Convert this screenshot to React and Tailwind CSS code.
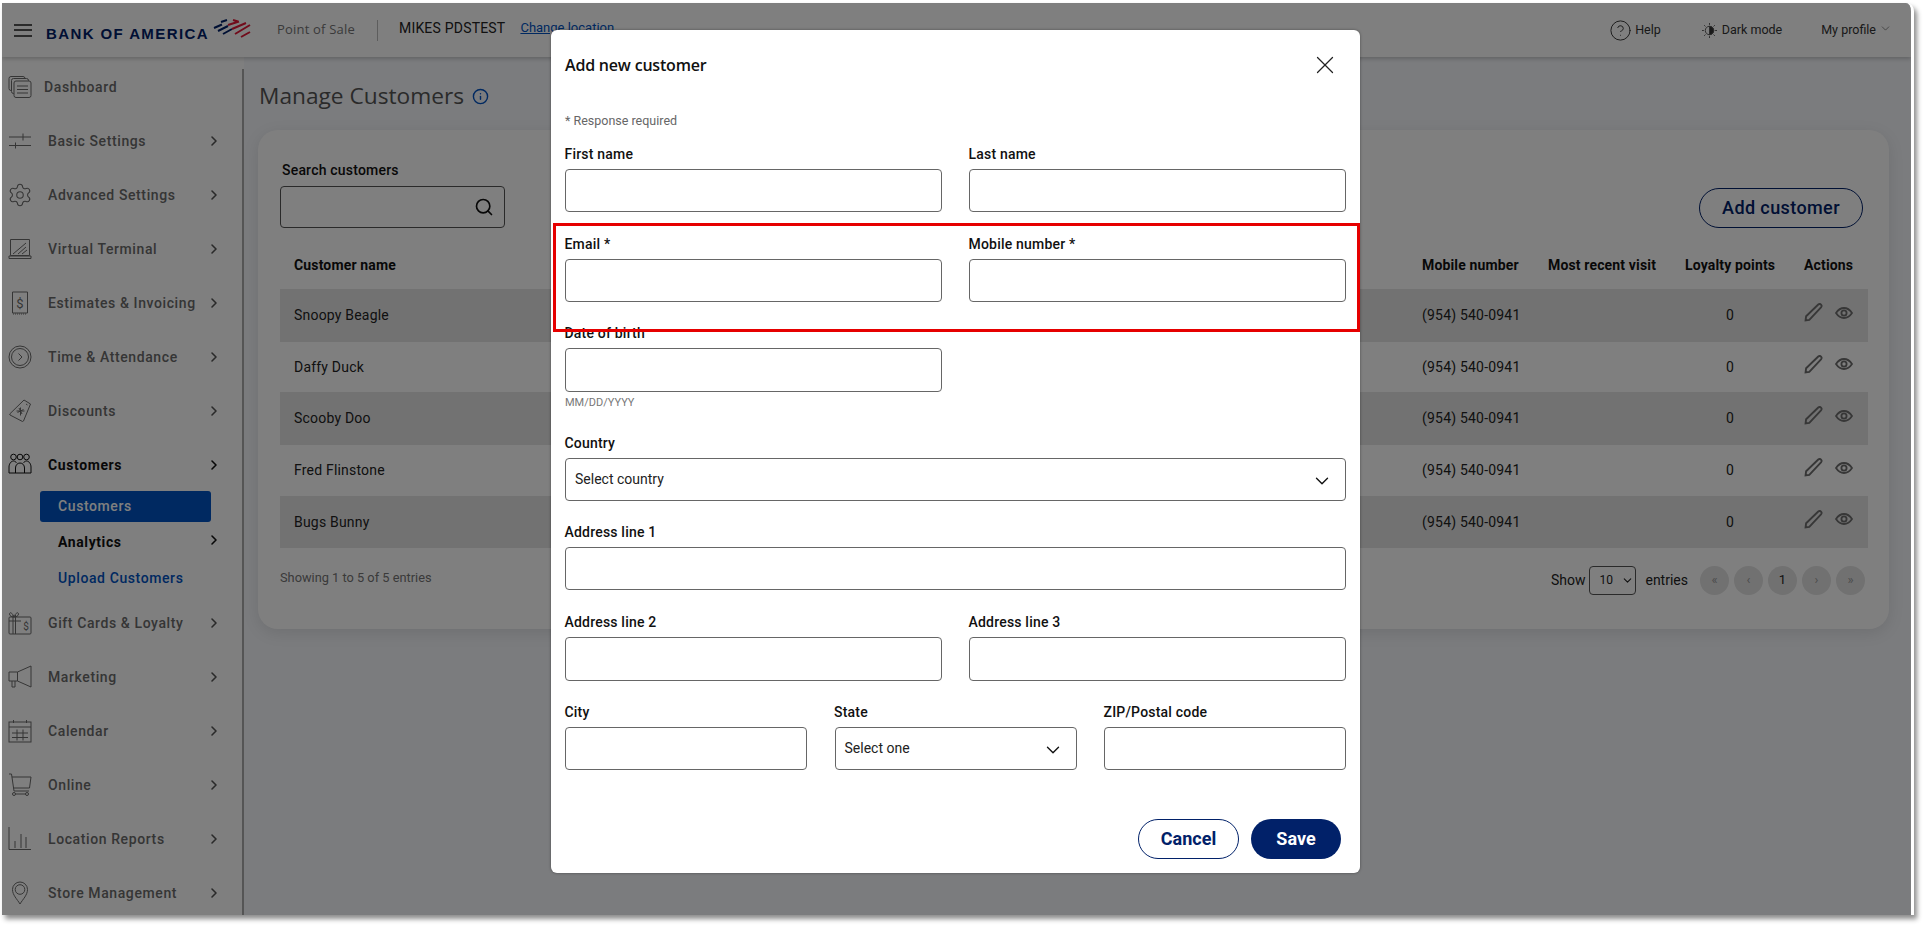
import React from "react";
import { Settings, Search, ChevronRight, ChevronDown, X, HelpCircle, Info } from "lucide-react";

const Ico = ({ children }) => (
  <svg viewBox="0 0 24 24" fill="none" stroke="currentColor" strokeWidth="1" className="w-[24px] h-[24px] shrink-0">
    {children}
  </svg>
);

const icons = {
  dashboard: (
    <Ico>
      <rect x="1" y="1.5" width="16" height="14" rx="2" />
      <rect x="3.5" y="3.5" width="17" height="15" rx="2" fill="#fff" />
      <rect x="6" y="6" width="17" height="16.5" rx="2" fill="#fff" />
      <path d="M9 11h11M9 14.5h11M9 18h11" />
    </Ico>
  ),
  sliders: (
    <Ico>
      <path d="M1 8h22M1 16.5h22M15 4.5v7M7.5 13.5v6" />
    </Ico>
  ),
  gear: <Settings size={26} strokeWidth={1} className="shrink-0 -ml-px" />,
  terminal: (
    <Ico>
      <path d="M2.5 2.5h19v16h-19zM1 19h22v2.5H1z" />
      <path d="M5 17L18 6M10 17l8-7M14 17l5-4" />
    </Ico>
  ),
  invoice: (
    <Ico>
      <path d="M4.5 1h15v21h-15z" />
      <path d="M5 23h14" strokeDasharray="1 1" />
      <text x="12" y="16.5" textAnchor="middle" fontSize="13" fill="currentColor" stroke="none" fontFamily="Roboto, sans-serif">$</text>
    </Ico>
  ),
  time: (
    <Ico>
      <circle cx="12" cy="12" r="11" />
      <circle cx="12" cy="12" r="8.5" />
      <path d="M10.5 8.5l3.5 3.5-3.5 3.5" />
    </Ico>
  ),
  discount: (
    <Ico>
      <path d="M16 1l6.5 4-7 17-1 .5L2 16l-.3-1z" />
      <path d="M11 9l3 6M15.5 10.5l-6 3M12.5 8.5v8M8.5 12h8" />
      <path d="M18 5l1.5 1" />
    </Ico>
  ),
  customers: (
    <Ico>
      <circle cx="5.5" cy="4" r="2.8" />
      <circle cx="12" cy="4" r="2.8" />
      <circle cx="18.5" cy="4" r="2.8" />
      <path d="M1 20v-6c0-3 2-6 4.5-6 1.5 0 2.5 1 3 2M23 20v-6c0-3-2-6-4.5-6-1.5 0-2.5 1-3 2" />
      <path d="M1 20h22M7.5 20v-5c0-3 2-5 4.5-5s4.500 2 4.500 5v5" />
    </Ico>
  ),
  gift: (
    <Ico>
      <rect x="1" y="6" width="22" height="17" rx="1" />
      <path d="M5 4v19M7.500 4v19M1 10h12M6 6C4 1 1.500 1 1.500 3S4 6 6 6c2 0 4.500-1 4.500-3S8 1 6 6z" />
      <text x="18" y="19" textAnchor="middle" fontSize="10" fill="currentColor" stroke="none" fontFamily="Roboto, sans-serif">$</text>
    </Ico>
  ),
  marketing: (
    <Ico>
      <path d="M1 7h8.500v9H1zM9.500 7L23 1v21l-13.500-6" />
      <path d="M4 16v6h3v-6" />
    </Ico>
  ),
  calendar: (
    <Ico>
      <rect x="1" y="3" width="22" height="20" />
      <path d="M1 8h22M5.500 1v3M18.500 1v3M4 14h16M4 18.500h16M9 10.500v11M15 10.500v11" />
    </Ico>
  ),
  cart: (
    <Ico>
      <path d="M1 1h2.500L6 18h15M4 4h19l-1.500 11H5.500" />
      <circle cx="6" cy="21" r="1.500" />
      <circle cx="19" cy="21" r="1.500" />
      <path d="M7.500 21h10" />
    </Ico>
  ),
  reports: (
    <Ico>
      <path d="M1 0v22.500h22M7 21v-7M13 21V7M18 21V10" />
    </Ico>
  ),
  pin: (
    <Ico>
      <path d="M12 23C9 18 4.500 14 4.500 8.500a7.500 7.500 0 0 1 15 0C19.500 14 15 18 12 23z" />
      <circle cx="12" cy="8.500" r="4.800" />
    </Ico>
  ),
};

const Item = ({ icon, label, active }) => (
  <div className={`flex items-center h-[54px] pl-[6px] ${active ? "text-[#111]" : "text-[#6b6b6b]"}`}>
    <span className="w-[40px]">{icons[icon]}</span>
    <span className={`text-[14px] tracking-[0.6px] w-[158px] ${active ? "font-bold" : "font-medium"}`}>{label}</span>
    <ChevronRight size={16} strokeWidth={2.4} className={active ? "text-[#111]" : "text-[#555]"} />
  </div>
);

const PencilIcon = () => (
  <svg viewBox="0 0 18 18" fill="none" stroke="#6e6e6e" strokeWidth="1.8" className="w-[19px] h-[19px] -mt-[6px]">
    <path d="M1.500 16.500l.5-4L13.500 1.500c1-.8 2-.6 2.600 0s.8 1.600 0 2.600L5 16z" />
  </svg>
);

const EyeIcon = () => (
  <svg viewBox="0 0 18 12" fill="none" stroke="#6e6e6e" strokeWidth="1.8" className="w-[18px] h-[12px] -mt-[6px]">
    <path d="M1 6c2-3 5-5 8-5s6 2 8 5c-2 3-5 5-8 5S3 9 1 6z" />
    <circle cx="9" cy="6" r="2.600" />
  </svg>
);

const rows = [
  { name: "Snoopy Beagle", cls: "h-[53px] bg-[#e5e5e5]" },
  { name: "Daffy Duck", cls: "h-[50px]" },
  { name: "Scooby Doo", cls: "h-[53px] bg-[#e5e5e5]" },
  { name: "Fred Flinstone", cls: "h-[51px]" },
  { name: "Bugs Bunny", cls: "h-[52px] bg-[#e5e5e5]" },
];

const Label = ({ children }) => (
  <label className="block h-[20px] mb-[5px] -ml-[0.5px] text-[14px] leading-[20px] font-medium tracking-[0.2px] text-[#111]">{children}</label>
);

const Field = ({ label, tall }) => (
  <div>
    <Label>{label}</Label>
    <input className={`block w-full border border-[#666] rounded-[4px] bg-white outline-none ${tall ? "h-[44px] -mb-px" : "h-[43px]"}`} />
  </div>
);

const SelectField = ({ label, value }) => (
  <div>
    <Label>{label}</Label>
    <div className="flex items-center justify-between h-[43px] border border-[#666] rounded-[4px] pl-[9px] pr-[12px] text-[14px] text-[#222]">
      <span>{value}</span>
      <ChevronDown size={22} strokeWidth={1.5} className="mt-[2px] text-[#111]" />
    </div>
  </div>
);

const PageBtn = ({ children, dark }) => (
  <span className={`flex items-center justify-center w-[29px] h-[29px] rounded-full bg-[#e3e3e3] text-[13px] ${dark ? "text-[#222]" : "text-[#999]"}`}>
    {children}
  </span>
);

export default function App() {
  return (
    <div className="w-[1928px] h-[929px] bg-white pl-[2px] pt-[3px] font-[Roboto,sans-serif] overflow-hidden">
      <div className="relative flex flex-col w-[1912px] h-[912px] overflow-hidden rounded-tr-[8px] border-r-[3px] border-white bg-[#f6f8fc] shadow-[3px_4px_5px_rgba(0,0,0,0.45)]">
        {/* Header */}
        <header className="flex items-center h-[54px] shrink-0 bg-white shadow-[0_2px_4px_rgba(0,0,0,0.2)] z-10">
          <div className="flex flex-col gap-[3.500px] ml-[12px] w-[18px]">
            <span className="h-[2px] bg-[#555]" />
            <span className="h-[2px] bg-[#555]" />
            <span className="h-[2px] bg-[#555]" />
          </div>
          <span className="ml-[14px] mt-[9px] font-['Liberation_Sans',sans-serif] font-bold text-[15px] tracking-[1.4px] text-[#012169] whitespace-nowrap">BANK OF AMERICA</span>
          <svg viewBox="0 0 38 19" fill="none" strokeWidth="2" className="w-[38px] h-[19px] ml-[4px] -mt-[3px]">
            <path d="M1 9l8-3.500M5 12l10-5M10 15l9-5M8 3l6-2" stroke="#012169" />
            <path d="M20 1l5 1.500M15 6l11-3.500M19 10l14-6M22 15l15-9M28 18l9-5" stroke="#e31837" />
          </svg>
          <span className="ml-[26px] font-['Open_Sans',sans-serif] text-[13px] tracking-[0.2px] text-[#757575]">Point of Sale</span>
          <span className="ml-[22px] h-[21px] w-px bg-[#bbb]" />
          <span className="ml-[21px] -mt-[4px] text-[14px] tracking-[0.2px] text-[#222]">MIKES PDSTEST</span>
          <span className="ml-[15px] -mt-[4px] text-[13px] text-[#0052c2] underline whitespace-nowrap">Change location</span>
          <div className="ml-auto flex items-center text-[12.500px] text-[#333] pr-[19px]">
            <HelpCircle size={23} strokeWidth={1} />
            <span className="ml-[3px]">Help</span>
            <svg viewBox="0 0 16 16" className="ml-[41px] w-[15px] h-[15px]" fill="none" stroke="#555" strokeWidth="1">
              <circle cx="8" cy="8" r="4.500" />
              <path d="M8 3.500a4.500 4.500 0 0 1 0 9z" fill="#333" />
              <path d="M8 0v2M8 14v2M0 8h2M14 8h2M2.300 2.300l1.400 1.400M12.300 12.300l1.400 1.400M2.300 13.700l1.400-1.400M12.300 3.700l1.400-1.400" />
            </svg>
            <span className="ml-[5px]">Dark mode</span>
            <span className="ml-[39px]">My profile</span>
            <ChevronDown size={13} strokeWidth={1} className="ml-[3px] -mt-[3px]" />
          </div>
        </header>

        <div className="flex flex-1 min-h-0">
          {/* Sidebar */}
          <aside className="flex w-[242px] shrink-0 bg-white">
            <nav className="w-[240px] pt-[3px]">
              <div className="flex items-center h-[54px] pl-[6px] text-[#6b6b6b]">
                <span className="w-[36px]">{icons.dashboard}</span>
                <span className="text-[14px] font-medium tracking-[0.6px]">Dashboard</span>
              </div>
              <Item icon="sliders" label="Basic Settings" />
              <Item icon="gear" label="Advanced Settings" />
              <Item icon="terminal" label="Virtual Terminal" />
              <Item icon="invoice" label="Estimates &amp; Invoicing" />
              <Item icon="time" label="Time &amp; Attendance" />
              <Item icon="discount" label="Discounts" />
              <Item icon="customers" label="Customers" active />
              <div className="-mt-px">
                <div className="flex items-center ml-[38px] w-[171px] h-[31px] pl-[18px] rounded-[3px] bg-[#0052c2] text-white text-[14px] font-medium tracking-[0.6px]">Customers</div>
                <div className="flex items-center justify-between h-[36px] mt-[2px] pl-[56px] pr-[20px] text-[14px] font-bold tracking-[0.6px] text-[#111]">
                  Analytics
                  <ChevronRight size={16} strokeWidth={2.4} className="-mt-[5px]" />
                </div>
                <div className="flex items-center h-[36px] pl-[56px] text-[14px] font-medium tracking-[0.6px] text-[#0052c2]">Upload Customers</div>
              </div>
              <Item icon="gift" label="Gift Cards &amp; Loyalty" />
              <Item icon="marketing" label="Marketing" />
              <Item icon="calendar" label="Calendar" />
              <Item icon="cart" label="Online" />
              <Item icon="reports" label="Location Reports" />
              <Item icon="pin" label="Store Management" />
            </nav>
            <div className="w-[2px] mt-[12px] bg-[#aaa]" />
          </aside>

          {/* Main */}
          <main className="flex-1 min-w-0 pl-[14px] pr-[22px]">
            <div className="flex items-center h-[32px] mt-[23px] mb-[18px] ml-[1px]">
              <h1 className="font-['Open_Sans',sans-serif] text-[22.700px] text-[#555] whitespace-nowrap">Manage Customers</h1>
              <Info size={17} strokeWidth={2} className="ml-[8px] text-[#0052c2]" />
            </div>

            <section className="h-[499px] rounded-[20px] bg-white pl-[22px] pr-[21px] pt-[30px] shadow-[0_4px_16px_rgba(0,0,0,0.1)]">
              <div className="flex items-end justify-between">
                <div>
                  <p className="h-[20px] mb-[6px] ml-[2px] text-[14px] leading-[20px] font-medium tracking-[0.2px] text-[#111]">Search customers</p>
                  <div className="flex items-center justify-end w-[225px] h-[42px] pr-[10px] border border-[#555] rounded-[4px] text-[#111]">
                    <Search size={20} strokeWidth={2} />
                  </div>
                </div>
                <button className="w-[164px] h-[40px] mr-[5px] pb-px rounded-full border border-[#012169] text-[18px] font-medium tracking-[0.4px] text-[#012169]">Add customer</button>
              </div>

              <div className="grid grid-cols-[1142px_126px_137px_119px_64px] items-center h-[48px] mt-[13px] text-[14px] font-bold tracking-[0.15px] text-[#111]">
                <span className="pl-[14px]">Customer name</span>
                <span>Mobile number</span>
                <span>Most recent visit</span>
                <span>Loyalty points</span>
                <span>Actions</span>
              </div>
              {rows.map((r) => (
                <div key={r.name} className={`grid grid-cols-[1142px_126px_137px_119px_64px] items-center text-[14px] tracking-[0.2px] text-[#222] ${r.cls}`}>
                  <span className="pl-[14px]">{r.name}</span>
                  <span>(954) 540-0941</span>
                  <span />
                  <span className="w-[90px] text-center">0</span>
                  <span className="flex items-center gap-[12px]">
                    <PencilIcon />
                    <EyeIcon />
                  </span>
                </div>
              ))}

              <div className="flex items-center justify-between h-[30px] mt-[17px] pr-[3px]">
                <span className="text-[12.800px] -mt-[4px] text-[#757575]">Showing 1 to 5 of 5 entries</span>
                <div className="flex items-center text-[14px] text-[#222]">
                  <span>Show</span>
                  <div className="flex items-center justify-between w-[47px] h-[29px] ml-[4px] pl-[9px] pr-[1px] border border-[#555] rounded-[4px] text-[12px]">
                    10
                    <ChevronDown size={13} strokeWidth={2} />
                  </div>
                  <span className="ml-[9px] mr-[12px]">entries</span>
                  <div className="flex gap-[5px]">
                    <PageBtn>«</PageBtn>
                    <PageBtn>‹</PageBtn>
                    <PageBtn dark>1</PageBtn>
                    <PageBtn>›</PageBtn>
                    <PageBtn>»</PageBtn>
                  </div>
                </div>
              </div>
            </section>
          </main>
        </div>

        {/* Overlay + modal */}
        <div className="absolute inset-0 z-20 bg-black/50">
          <div className="absolute left-[549px] top-[27px] w-[809px] h-[843px] rounded-[6px] bg-white pl-[14px] pr-[14px] shadow-[0_0_3px_rgba(0,0,0,0.4)]">
            <div className="flex items-center justify-between h-[70px]">
              <h2 className="font-['Open_Sans',sans-serif] text-[16px] font-semibold tracking-[-0.2px] text-[#111]">Add new customer</h2>
              <X size={30} strokeWidth={1} className="mr-[6px] -mt-[1px] text-[#222]" />
            </div>
            <p className="h-[20px] mt-[11px] mb-[13px] text-[12.500px] leading-[20px] text-[#666]">* Response required</p>

            <div className="flex flex-col gap-[22px]">
              <div className="grid grid-cols-2 gap-x-[27px]">
                <Field label="First name" />
                <Field label="Last name" />
              </div>
              <div className="grid grid-cols-2 gap-x-[27px]">
                <Field label="Email *" />
                <Field label="Mobile number *" />
              </div>
              <div className="grid grid-cols-2 gap-x-[27px] -mt-px">
                <div>
                  <Field label="Date of birth" tall />
                  <p className="h-[17px] mt-[3px] text-[11px] leading-[18px] text-[#777]">MM/DD/YYYY</p>
                </div>
              </div>
              <SelectField label="Country" value="Select country" />
              <div className="-mt-px">
                <Field label="Address line 1" />
              </div>
              <div className="grid grid-cols-2 gap-x-[27px]">
                <Field label="Address line 2" tall />
                <Field label="Address line 3" tall />
              </div>
              <div className="grid grid-cols-3 gap-x-[27.500px]">
                <Field label="City" />
                <SelectField label="State" value="Select one" />
                <Field label="ZIP/Postal code" />
              </div>
            </div>

            <div className="flex justify-end gap-[12px] mt-[49px] pr-[5px]">
              <button className="w-[101px] h-[40px] pb-px rounded-full border border-[#012169] text-[18px] font-bold text-[#012169]">Cancel</button>
              <button className="w-[90px] h-[40px] pb-px rounded-full bg-[#012169] text-[18px] font-bold text-white">Save</button>
            </div>

            {/* Callout drawn on the screenshot */}
            <div className="absolute left-[2px] top-[193px] w-[807px] h-[109px] border-[3px] border-[#e60000]" />
          </div>
        </div>
      </div>
    </div>
  );
}
